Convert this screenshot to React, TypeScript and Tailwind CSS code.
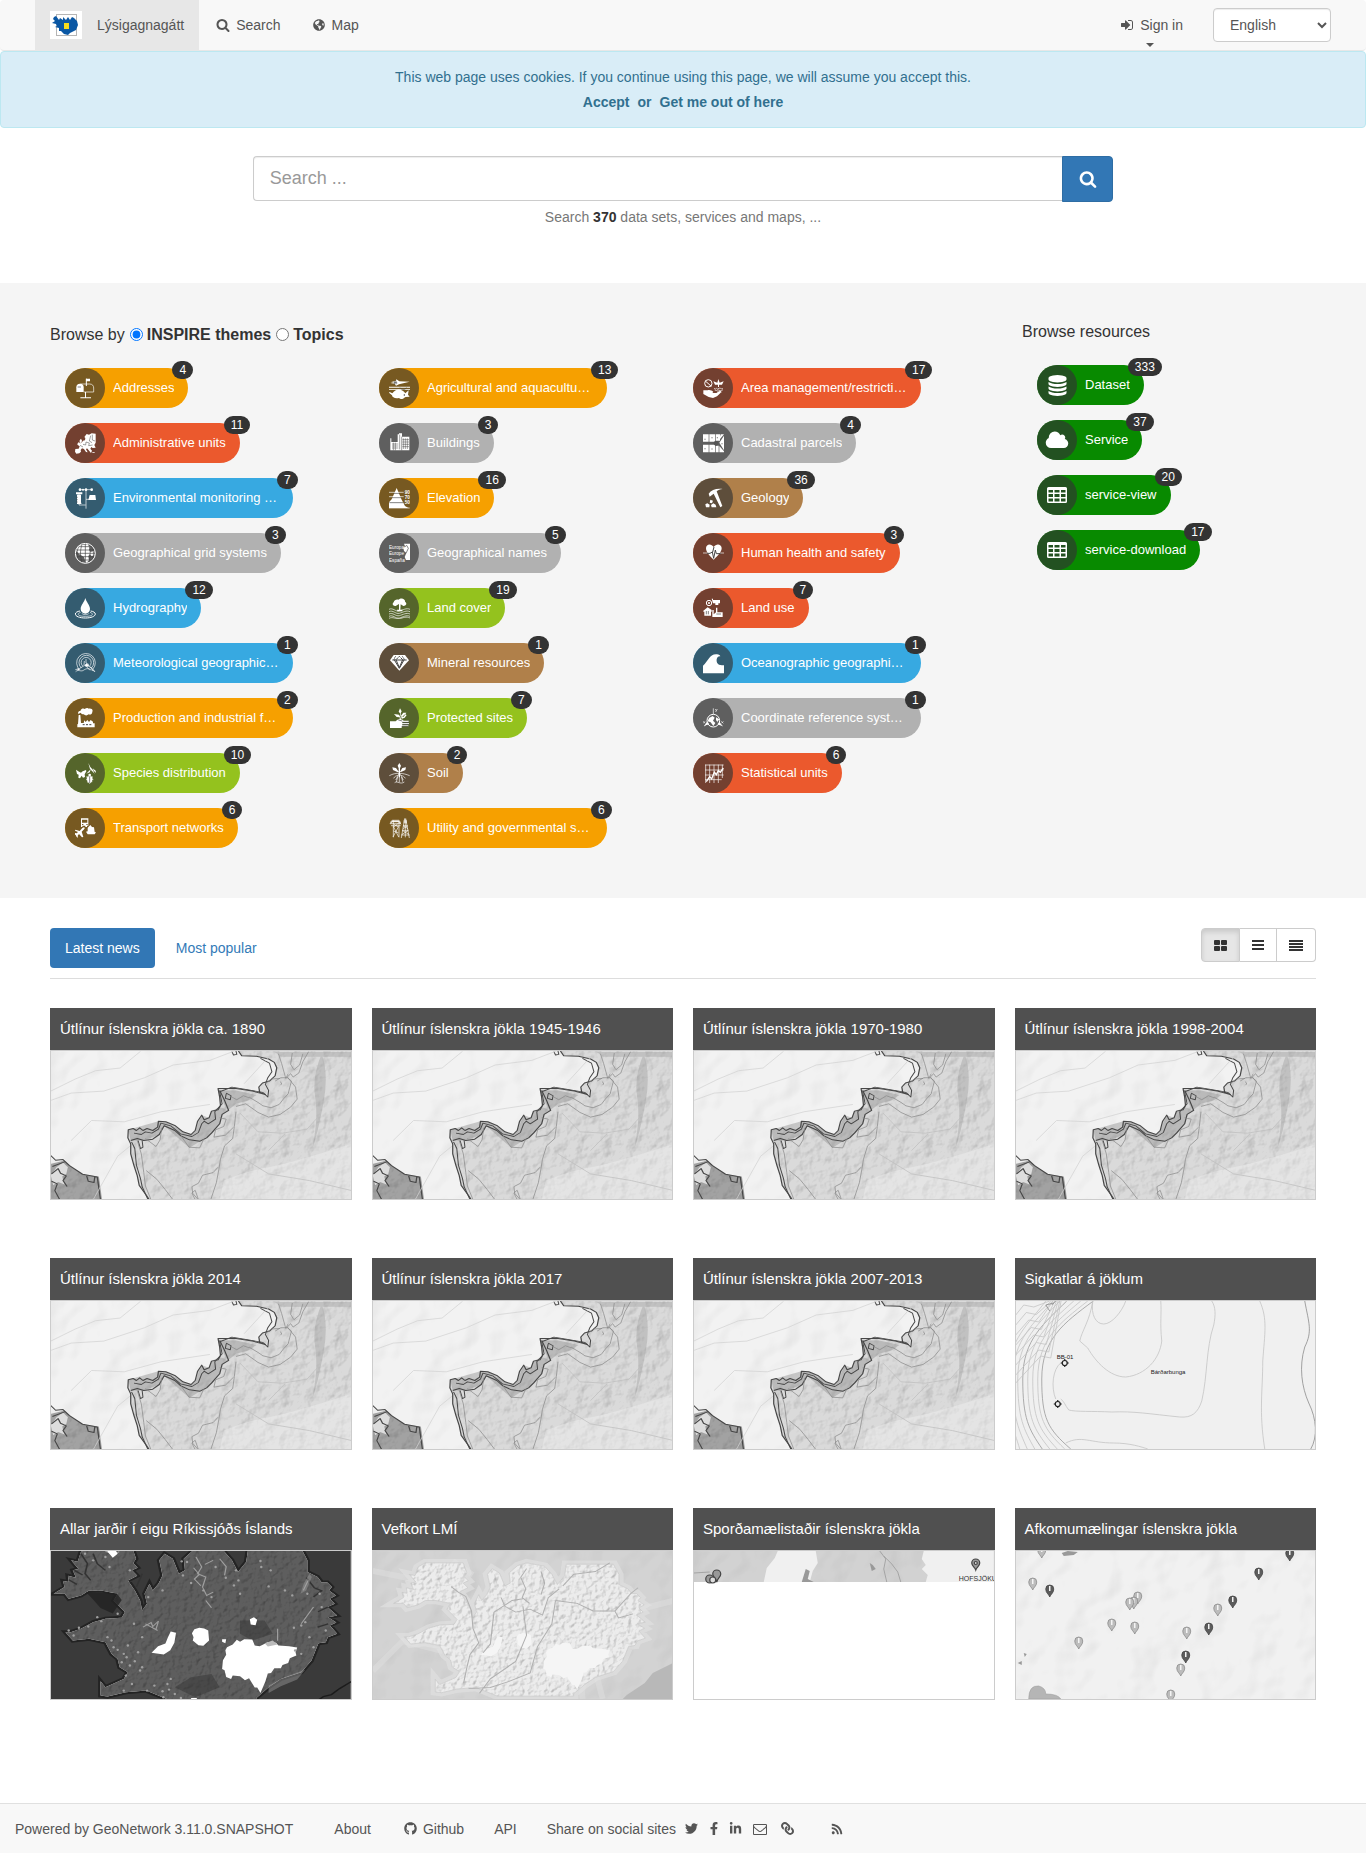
import React from 'react';
import {
  FaFacebookF,
  FaGithub,
  FaGlobeAmericas,
  FaLink,
  FaLinkedinIn,
  FaRss,
  FaTwitter,
} from 'react-icons/fa';

/* ---------- Glyph icons ---------- */

const SEARCH =
  'M1216 832q0-185-131.5-316.5t-316.5-131.5-316.5 131.5-131.5 316.5 131.5 316.5 316.5 131.5 316.5-131.5 131.5-316.5zm512 832q0 52-38 90t-90 38q-54 0-90-38l-343-342q-179 124-399 124-143 0-273.5-55.5t-225-150-150-225-55.5-273.5 55.5-273.5 150-225 225-150 273.5-55.5 273.5 55.5 225 150 150 225 55.5 273.5q0 220-124 399l343 343q37 37 37 90z';
const SIGN_IN =
  'M1312 896q0 26-19 45l-544 544q-19 19-45 19t-45-19-19-45v-288h-448q-26 0-45-19t-19-45v-384q0-26 19-45t45-19h448v-288q0-26 19-45t45-19 45 19l544 544q19 19 19 45zm352-352v704q0 119-84.5 203.5t-203.5 84.5h-320q-13 0-22.5-9.5t-9.5-22.5q0-4-1-20t-.5-26.5 3-23.5 10-19.5 20.5-6.5h320q66 0 113-47t47-113v-704q0-66-47-113t-113-47h-312l-11.5-1-11.5-3-8-5.5-7-9-2-13.5q0-4-1-20t-.5-26.5 3-23.5 10-19.5 20.5-6.5h320q119 0 203.5 84.5t84.5 203.5z';
const ENVELOPE =
  'M1664 1504v-768q-32 36-69 66-268 206-426 338-51 43-83 67t-86.5 48.5-102.5 24.5h-2q-48 0-102.5-24.5t-86.5-48.5-83-67q-158-132-426-338-37-30-69-66v768q0 13 9.5 22.5t22.5 9.5h1472q13 0 22.5-9.5t9.5-22.5zm0-1051v-24.5l-.5-13-3-12.5-5.5-9-9-7.5-14-2.5h-1472q-13 0-22.5 9.5t-9.5 22.5q0 168 147 284 193 152 401 317 6 5 35 29.5t46 37.5 44.5 31.5 50.5 27.5 43 9h2q20 0 43-9t50.5-27.5 44.5-31.5 46-37.5 35-29.5q208-165 401-317 54-43 100.5-115.5t46.5-131.5zm128-37v1088q0 66-47 113t-113 47h-1472q-66 0-113-47t-47-113v-1088q0-66 47-113t113-47h1472q66 0 113 47t47 113z';
const DATABASE =
  'M896 768q237 0 443-43t325-127v170q0 69-103 128t-280 93.5-385 34.5-385-34.5-280-93.5-103-128v-170q119 84 325 127t443 43zm0 768q237 0 443-43t325-127v170q0 69-103 128t-280 93.5-385 34.5-385-34.5-280-93.5-103-128v-170q119 84 325 127t443 43zm0-384q237 0 443-43t325-127v170q0 69-103 128t-280 93.5-385 34.5-385-34.5-280-93.5-103-128v-170q119 84 325 127t443 43zm0-1152q208 0 385 34.5t280 93.5 103 128v128q0 69-103 128t-280 93.5-385 34.5-385-34.5-280-93.5-103-128v-128q0-69 103-128t280-93.5 385-34.5z';
const CLOUD =
  'M1984 1152q0 159-112.5 271.5t-271.5 112.5h-1088q-185 0-316.5-131.5t-131.5-316.5q0-132 71-241.5t187-163.5q-2-28-2-43 0-212 150-362t362-150q158 0 286.5 88t187.5 230q70-62 166-62 106 0 181 75t75 181q0 75-41 138 129 30 213 134.5t84 239.5z';

function Glyph({ d, className, box = '0 0 1792 1792' }: { d: string; className: string; box?: string }) {
  return (
    <svg viewBox={box} className={className} fill="currentColor" aria-hidden="true">
      <path d={d} />
    </svg>
  );
}

function TableIcon() {
  return (
    <svg viewBox="0 0 20 16" className="h-4 w-5" fill="currentColor" aria-hidden="true">
      <path
        fillRule="evenodd"
        d="M1.500 0h17a1.500 1.500 0 0 1 1.500 1.500v13a1.500 1.500 0 0 1-1.500 1.500h-17A1.500 1.500 0 0 1 0 14.500v-13A1.500 1.500 0 0 1 1.500 0zM1.500 3v2.500h4.500V3zM7.500 3v2.500h5V3zM14 3v2.500h4.500V3zM1.500 7v3h4.500V7zM7.500 7v3h5V7zM14 7v3h4.500V7zM1.500 11.500v3h4.500v-3zM7.500 11.500v3h5v-3zM14 11.500v3h4.500v-3z"
      />
    </svg>
  );
}

/* ---------- Theme icons, drawn on a 63 unit square ---------- */

const L = { fill: 'none', stroke: '#fff', strokeWidth: 3 } as const;
const LT = { fill: 'none', stroke: '#fff', strokeWidth: 2 } as const;
const DK = { fill: 'none', stroke: '#444', strokeWidth: 2 } as const;

const themeIcons: Record<string, React.ReactNode> = {
  addresses: (
    <>
      <path d="M4 42V28a11 11 0 0 1 22 0v14z" />
      <path d="M8 27h10" {...DK} />
      <path d="M16 18h28c8 0 12 5 12 12v12H26" {...LT} />
      <path d="M34 24V2" {...L} />
      <path d="M33 2h12v8H33zM30 42h3v17h-3zM16 58h32v3H16z" />
    </>
  ),
  admin: (
    <>
      <path d="M42 5l8-4 12 1v27l-4 7 4 8-9 1-4-3-3 5 5 6-3 7-5-6-7-8-3 3 5 9-5-1-6-9-6-2-4 5 1 5-5 5-9 1-4-6 1-8 10-1 3-7-7-5 2-6 7 2 5-3 3-5 6-1 1-7-3-3 7-9z" />
      <path d="M47 8l-4 16 8 5M52 5v16l8 3M24 34l8 2 1-9 10 3-2 8 12-2M15 37l9 5" {...DK} strokeWidth={1.500} />
      <path d="M14 22l4-5 3 6-2 6-5 1zM10 28l3 2-2 3-3-1zM52 58h7v2h-7zM36 58l6 3" />
    </>
  ),
  environment: (
    <>
      <path d="M14 5h36M33 5v57M12 18v33h20M12 46h8M33 34h9" {...LT} />
      <circle cx="15" cy="5" r="4" />
      <circle cx="24" cy="5" r="3" />
      <circle cx="33" cy="5" r="4" />
      <circle cx="50" cy="5" r="4" />
      <path d="M3 13h19v6H3zM6 20h12v28H6zM44 21h17l2 15H40z" />
      <path d="M4 28h4M4 35h4M4 42h4" {...DK} />
    </>
  ),
  grid: (
    <>
      <path d="M18 6l20-2 8 8-4 8 6 9-8 10 2 14-10 7-5-18-15-9-8-9 4-13zM46 27l11-3 1 11-7 5-6-5z" />
      <path d="M4 21h54M2 31h58M4 41h54M10 11h42M10 51h42M31 2v58M21 4c-6 18-6 36 0 54M41 4c6 18 6 36 0 54M11 11c-6 13-6 27 0 40M51 11c6 13 6 27 0 40" {...DK} strokeWidth={2} />
      <circle cx="31" cy="31" r="30" {...L} />
    </>
  ),
  hydro: (
    <>
      <path d="M31 0c2 11 14 22 14 33a14 14 0 0 1-28 0C17 22 29 11 31 0z" />
      <path d="M15 39c-8 1-14 5-14 9 0 7 13 12 30 12s30-5 30-12c0-4-6-8-14-9" {...L} />
      <path d="M17 43c-4 1-7 3-7 6 0 4 9 6 21 6s21-2 21-6c0-3-3-5-7-6M21 46c1 5 19 5 21 0" {...LT} />
    </>
  ),
  meteo: (
    <>
      <path d="M15 51A28 28 0 1 1 53 49M19 45a22 22 0 1 1 30 0M23 39a15 15 0 1 1 21 0" {...LT} />
      <path d="M33 18v12l8 4M28 24l-1 12" {...LT} />
      <path d="M1 50l12-3 16-10 5-4 9 8 8 5 8 9M2 56c8-8 15 1 23-4s15-9 30 2M30 36l15 16M43 39l17 18" {...LT} />
      <path d="M8 45l5 4-5 5zM33 32l9 3-2 6-11-1z" />
    </>
  ),
  production: (
    <>
      <path d="M9 49L11 21h5l2 24h8l2-8 4 5 5-6 5 6 5-6 7 5v5h5v12H7V48z" />
      <path d="M10 18c-2-6 1-9 6-9 3-9 11-8 13-6 5-4 11-3 12-1 8-2 14 3 11 9 0 8-7 10-11 8-5 5-11 4-15 0-4 0-7-2-9-5z" />
      <path d="M23 50h6M33 50h6M43 50h6" {...DK} strokeWidth={3} />
    </>
  ),
  species: (
    <>
      <path d="M3 20l9 6 6 3 5-4 10-4 1 4-5 9 1 8-6 2-4-6-5 8-5-2 1-9-5-2z" />
      <path d="M40 0l6 12 8 9 5 12-5-6-9-9zM53 16l9 7 1 7-6-6zM34 32l10-10 3-2-3 8z" />
      <circle cx="44" cy="36" r="4" />
      <path d="M37 41l7-2 7 2 2 7-3 8-6 6-6-6-3-8z" />
      <path d="M33 42l21 0M33 50h22M36 57l16-1" {...LT} />
      <path d="M44 40v20" {...DK} />
    </>
  ),
  transport: (
    <>
      <path fillRule="evenodd" d="M18 1h22v22h-4v4h-5v-4h-9v4h-4zM21 5v9h16V5zM21 18v3h4v-3zM34 18v3h4v-3z" />
      <path d="M38 29l8-8 5 6 6 1 2 14 4 1-4 6H38l-5-8 5-1zM1 35l13 4 8-9c5-4 9-2 6 3l-8 8 5 16-4 1-9-10-4 5 1 6-4-2-3-6-6-3 2-3 7 1 4-4L0 38z" />
    </>
  ),
  agriculture: (
    <>
      <path d="M4 15l12-3-9-3 13 1 2-6 9 6 31 1-32 8-9 4-4-6zM0 26h63v3H0zM0 33h63v2H0z" />
      <path d="M2 42l8 4c10-14 27-16 39 0l10-9-2 13 5 6-12 1c-8 4-10 10-20 3-11 3-21-2-21-8L0 44z" />
      <path d="M16 10v9M21 8v11M16 13l9 2M33 29c5 7 16 7 19 0" {...DK} />
      <circle cx="46" cy="51" r="2" fill="#333" />
    </>
  ),
  buildings: (
    <>
      <path fillRule="evenodd" d="M4 16h3v11h19V4h4V1h9v10h22v41H4z" />
      <path d="M32 5v44M38 11v41M9 33h19M9 39h19M9 45h19M13 29v23M19 29v23M43 16v32M49 16v32M55 16v32M40 20h20M40 27h20M40 34h20M40 41h20" {...DK} strokeWidth={1.500} />
    </>
  ),
  elevation: (
    <>
      <path d="M23 0l15 35 10 19 10 6H0V43l8-9z" />
      <path d="M14 16h18M9 29h28M1 44h41" {...DK} />
      <path d="M0 13h44M0 26h44M0 60h62" {...LT} />
      <g fontFamily="Liberation Sans" fontWeight="bold" fontSize="14">
        <text x="47" y="18">90</text>
        <text x="47" y="34">70</text>
        <text x="47" y="49">50</text>
      </g>
    </>
  ),
  names: (
    <>
      <path d="M45 2h18v49H51l-4-9 5-12-7-6-2-10 5-4z" />
      <path d="M47 12l6-5 5 9-7 15" {...DK} />
      <g fontFamily="Liberation Sans" fontSize="14">
        <text x="0" y="19">Europa</text>
        <text x="0" y="37">Europe</text>
        <text x="0" y="56">España</text>
      </g>
    </>
  ),
  landcover: (
    <>
      <path d="M20 24c-10 1-11-8-6-11 2-8 9-10 14-8C39-4 50 5 48 11c8 6 3 13-5 13l-8-5-1 16h6v5H25l-1-5h6V18z" />
      <path d="M0 34c12-6 20 8 31 5s21-10 32-5M0 41c12-6 20 8 31 5s21-10 32-5M0 48c12-6 20 8 31 5s21-10 32-5M0 55c12-6 20 8 31 5s21-10 32-5M0 61c12-6 20 3 31 1s21-8 32-2" {...LT} />
    </>
  ),
  mineral: (
    <>
      <path d="M14 6h34l12 16-29 31L3 22z" />
      <path d="M10 21h43M20 10l-5 9 16 27 15-27-7-10M21 20l10-10 10 10-10 24z" {...DK} strokeWidth={3} />
      <path d="M16 17l8-7 7 8 7-8 8 7" {...LT} />
    </>
  ),
  protected: (
    <>
      <path d="M33 1l5 9-3 6v10h9l8-12-9 0-7 9h-3v-7l-4-5zM15 18l15 2 5 9 1 8h-4V28l-9-1zM36 29l12-10 5 2-6 8-8 3z" />
      <path d="M3 40h17c9-8 14-9 24-2h15v4H40v3h20v4H40v3h18v3H38v5H3z" />
      <path d="M28 36l12 3M41 43h19M40 49h20M39 55h18" {...DK} />
    </>
  ),
  soil: (
    <>
      <path d="M31 0l5 8-3 8v10l7-11 11-2-2 8-13 6h-3v16h-4V27h-4l-13-6-2-8 11 2 8 11V16l-3-8z" />
      <path d="M1 38c20-11 42-8 61 0M31 30c-2 12-11 4-17 16M32 30c2 12 10 4 17 16M28 36c-5 8-4 10-8 15M35 36c5 8 4 10 8 15M31 35v22M26 42l-4 15M38 42l3 14M17 59c9-7 16 7 29-2" {...LT} />
    </>
  ),
  utility: (
    <>
      <path d="M8 10h22v48M13 7v51M3 17h32M6 23h29M3 17l7-7h20l6 9M13 25l16 32M29 25L12 57M13 17l15 10M29 15L13 28M13 39l15 5M49 3v55M47 1L37 60M50 1l11 59M42 23l15 9M57 23l-15 9M40 37l19 12M58 37L38 50M43 23h12M40 37h18M37 51h25" {...LT} />
      <path d="M44 7h10v9H44zM3 12l7-7h20l6 8-3 5-5-5H10l-4 5z" fillOpacity=".6" />
    </>
  ),
  area: (
    <>
      <circle cx="16" cy="16" r="11" {...L} />
      <path d="M7 9l18 16" {...L} />
      <path d="M46 3l4 11 12-4-5 10h-9v7h-3v-7h-9l-5-10 12 4z" />
      <path d="M1 37h13c5-2 13 0 17 5l-3 3h12l12-7c4 2 1 6-2 9l-8 8-12 5-13-3L1 48z" />
      <path d="M33 31c8 6 4-4 11 2 7-6 9 1 16-1M35 36c9 5 8-4 13 1 7 3 9-2 12-1M42 42h14" {...LT} />
    </>
  ),
  cadastral: (
    <>
      <path d="M0 4h17v22H0zM19 4h17v22H19zM38 4h13v19H38zM53 4h10l-15 18zM0 35h17v23H0zM19 35h17v23H19zM38 38h9v20H38zM49 29l14-21v44zM49 39l14 16v3H49z" />
      <circle cx="39" cy="31" r="7" fill="#555" />
      <path d="M6 17v4M27 12v4M43 12v4M6 45v4M27 46v4M57 30v4" {...DK} />
    </>
  ),
  geology: (
    <>
      <path d="M17 17c8-12 23-16 42-14-8 1-14 3-18 7l17 44-6 4-20-41-12 9z" />
      <path d="M7 49l6-3 7 4-1 8H9zM22 35l8 3-3 8-7-2zM31 46l7 4 2 8H26l-2-7z" />
    </>
  ),
  health: (
    <>
      <path d="M32 12C25 1 10 2 9 15c0 12 9 21 23 35 14-14 24-23 24-35C55 2 39 1 32 12z" />
      <path d="M11 31h10l7-4 4 19 5-25 3 11h15M33 12l-4 15" {...DK} strokeWidth={3} />
      <path d="M0 30h13M52 30h11" {...LT} />
    </>
  ),
  landuse: (
    <>
      <circle cx="18" cy="15" r="8" {...L} />
      <circle cx="18" cy="15" r="3" />
      <path d="M26 2h4v4h21v10h-5v5h-9v-5h-7zM1 38l13-10 12 8v5h-2v12H4V41H1zM28 57V36h4v13l7-6V29h4v14h16v14z" />
      <path d="M10 39v10M16 39v10M40 48h14" {...DK} />
    </>
  ),
  ocean: (
    <path d="M0 38C16 25 19 2 42 4c6 0 9 3 10 6-13-2-15 20-4 25 6 2 12 1 15 2v24H0z" />
  ),
  coordinate: (
    <>
      <circle cx="31" cy="38" r="19" {...L} />
      <path d="M18 30l11-6 6 5-5 9 7 7-6 9-8-11-9-3zM39 28l10 6-6 8-4-6zM4 53l8-12 6 8zM58 53l-9-12-4 9z" />
      <path d="M31 19V1M3 54l15-9M44 45l15 9M37 3l3 5 3-5M40 8l-2 4M1 40l5 6M6 40l-5 6M55 40l6 6M61 40l-6 6" {...LT} />
    </>
  ),
  statistical: (
    <>
      <path d="M8 5v55M20 5v55M33 5v55M46 5v55M58 5v40M6 6h56M6 21h56M6 36h56M6 50h50" {...LT} />
      <path d="M10 56l10-15 6 7 8-21 6 8 6-12 6 5 9-13" {...L} strokeWidth={4} />
    </>
  ),
};

/* ---------- Facet chips ---------- */

type Tone = 'orange' | 'red' | 'blue' | 'gray' | 'brown' | 'lime' | 'green';

const tones: Record<Tone, string> = {
  orange: 'bg-[#f6a000]',
  red: 'bg-[#eb592d]',
  blue: 'bg-[#37a9e1]',
  gray: 'bg-[#b1b1b1]',
  brown: 'bg-[#b0804a]',
  lime: 'bg-[#94c21e]',
  green: 'bg-[#088a00]',
};

function Chip({ label, count, tone, icon }: { label: string; count: number; tone: Tone; icon: React.ReactNode }) {
  return (
    <a
      href="#"
      className={`relative flex h-10 w-fit max-w-[228px] items-center rounded-full pr-[14px] text-[13px] text-white ${tones[tone]}`}
    >
      <span className="flex h-10 w-10 shrink-0 items-center justify-center rounded-full bg-[#333333a6]">{icon}</span>
      <span className="ml-2 min-w-0 truncate">{label}</span>
      <span className="absolute -top-[7px] left-[calc(100%-16px)] h-[18px] rounded-[10px] bg-[#333] px-[7px] text-xs leading-[18px]">
        {count}
      </span>
    </a>
  );
}

const themes: [string, number, Tone, string][] = [
  ['Addresses', 4, 'orange', 'addresses'],
  ['Agricultural and aquaculture facilities', 13, 'orange', 'agriculture'],
  ['Area management/restriction/regulation zones', 17, 'red', 'area'],
  ['Administrative units', 11, 'red', 'admin'],
  ['Buildings', 3, 'gray', 'buildings'],
  ['Cadastral parcels', 4, 'gray', 'cadastral'],
  ['Environmental monitoring facilities', 7, 'blue', 'environment'],
  ['Elevation', 16, 'orange', 'elevation'],
  ['Geology', 36, 'brown', 'geology'],
  ['Geographical grid systems', 3, 'gray', 'grid'],
  ['Geographical names', 5, 'gray', 'names'],
  ['Human health and safety', 3, 'red', 'health'],
  ['Hydrography', 12, 'blue', 'hydro'],
  ['Land cover', 19, 'lime', 'landcover'],
  ['Land use', 7, 'red', 'landuse'],
  ['Meteorological geographical features', 1, 'blue', 'meteo'],
  ['Mineral resources', 1, 'brown', 'mineral'],
  ['Oceanographic geographical features', 1, 'blue', 'ocean'],
  ['Production and industrial facilities', 2, 'orange', 'production'],
  ['Protected sites', 7, 'lime', 'protected'],
  ['Coordinate reference systems', 1, 'gray', 'coordinate'],
  ['Species distribution', 10, 'lime', 'species'],
  ['Soil', 2, 'brown', 'soil'],
  ['Statistical units', 6, 'red', 'statistical'],
  ['Transport networks', 6, 'orange', 'transport'],
  ['Utility and governmental services', 6, 'orange', 'utility'],
];

/* ---------- Map thumbnails ---------- */

function Relief({ id, frequency, octaves, scale }: { id: string; frequency: string; octaves: number; scale: number }) {
  return (
    <filter id={id} x="0" y="0" width="100%" height="100%" colorInterpolationFilters="sRGB">
      <feTurbulence type="fractalNoise" baseFrequency={frequency} numOctaves={octaves} seed="4" />
      <feDiffuseLighting surfaceScale={scale} diffuseConstant="1.22" lightingColor="#fff" result="l">
        <feDistantLight azimuth="215" elevation="55" />
      </feDiffuseLighting>
      <feComposite in="l" in2="SourceAlpha" operator="in" result="m" />
      <feBlend in="SourceGraphic" in2="m" mode="multiply" />
    </filter>
  );
}

function TerrainFilters() {
  return (
    <svg className="absolute h-0 w-0" aria-hidden="true">
      <defs>
        <Relief id="faint" frequency="0.02" octaves={3} scale={1} />
        <Relief id="soft" frequency="0.03" octaves={4} scale={2} />
        <Relief id="rough" frequency="0.07" octaves={4} scale={2} />
      </defs>
    </svg>
  );
}

function MapFrame({ children, bg, label }: { children: React.ReactNode; bg: string; label: string }) {
  return (
    <svg viewBox="0 0 300 148" preserveAspectRatio="xMidYMid slice" className="block h-full w-full" role="img" aria-label={label}>
      <rect width="300" height="148" fill={bg} />
      {children}
    </svg>
  );
}

const FRONT =
  'M486 422L494 436L530 438L560 446L574 456L580 472L576 496L562 512L545 518L536 530L538 545L552 552L520 542L480 534L436 534L440 560L442 585L436 598L420 602L414 622L402 628L396 614L386 632L380 660L370 672L350 664L330 645L308 634L290 632L288 650L276 660L262 654L252 660L244 652L236 660L228 654L216 658L215 682L222 700L222 730L230 765L238 795L243 825L258 850L268 868';
const TONGUE =
  'M440 540L452 570L462 600L446 612L440 640L420 668L408 682L392 692L366 688L345 676L330 660L304 646L292 672L276 686L254 690L238 684L222 690';

function GlacierMap({ label }: { label: string }) {
  return (
    <MapFrame bg="#ececec" label={label}>
      <rect width="300" height="148" fill="#f2f2f2" filter="url(#faint)" />
      <g transform="scale(.408 .334) translate(-26 -422)">
        <path d={FRONT + 'L764 868V422z'} fill="#dadada" filter="url(#soft)" />
        <path d="M690 430q18 60 4 150t-26 130q14-90 6-150t16-130zM575 425h190v14H590z" fill="#888" fillOpacity=".3" />
        <path d="M450 810q60-30 110-40t204-70v168H440z" fill="#f2f2f2" fillOpacity=".4" />
        <path d="M216 658L290 632L308 634L350 664L370 672L380 660L396 614L414 622L420 602L440 590L462 600L446 612L440 640L420 668L408 682L392 692L366 712L345 690L304 646L292 672L254 690L222 690zM440 540l40 0 50 14-20 16-30 10-20 20-14-30z" fill="#999" fillOpacity=".5" />
        <path d="M26 760L60 750L75 768L105 792L144 798L152 868H26z" fill="#a2a2a2" filter="url(#soft)" />
        <path d="M40 770l16-14 12 14-4 20-10 8 6 24-16-8-12 10-6-30z" fill="#ddd" />
      </g>
      <g transform="scale(.408 .334) translate(-26 -422)" fill="none">
        <g stroke="#474747" strokeWidth="3" strokeLinejoin="round">
          <path d={FRONT} />
          <path d={TONGUE} />
          <path d="M540 444L562 458L568 484L558 502L552 522L560 540L558 560L546 546L500 536L470 530L440 544L446 580L428 604L430 626L412 640L402 632L396 640L388 666L372 678L344 670L320 646L296 638L290 656L274 668L258 664L248 672L230 668" strokeWidth="2.500" />
          <path d="M224 694l8 20 4 50 10 40 4 24 14 38M240 690l6 24 6-4-2-20" strokeWidth="2.500" />
          <path d="M26 735l12 14 18-2 16 18 32 26 36 8 8 69M28 790l16-16 6 14 14 8-8 14 10 18M114 796l4 16 14 4 2-18M30 768l30-14M28 812l14 8-6 20 12 27" />
          <path d="M470 424l4 10 8-2-2-10M456 548l12 8-2 12-12-4 2-14" strokeWidth="2.500" />
        </g>
        <g stroke="#8a8a8a" strokeWidth="2">
          <path d="M470 560l12 8 16-12 14 6M512 560l22 16 12 10 20 6 20-10 10-16 12-16 4-20 4-18-10-10-16 0-14 10M604 502l10-12 6 10 14-12 10-34 14-30" />
          <path d="M480 588l24-8 30 26 26 14 28-8 26-22 16-24-4-36-20-30M584 430l8 30 10 44 6-14M618 428l-4 34 8 16 14-14 8-34M552 520l14-14 22-2M588 514l4 4-2 6" />
          <path d="M480 604l-4 44-4 36-20 22-10 40-4 30-6 40-14 52M474 650l-20 24-28 6 4-22 20-10 6-22-16-4M436 770l-12 16-26 8-10 24-16 10 2 20 14 20M238 690l10 40 6 56 4 40 14 42" />
          <path d="M258 684l26 24 10-20 4-36M345 676l20 34 26 2 10-26M260 780l26 26 20 30 20 32M380 867l-8-20 8-8 8 28" />
        </g>
        <g stroke="#d2d2d2" strokeWidth="2">
          <path d="M26 542l60-36 50-25 60-8 50-50M26 570l50-22 80-6 100-40 70-38 90-14 60-28M76 690l50-60 80 4 90-30 120-22M130 867l60-130 30-30M500 520l60-80" />
        </g>
        <path d="M490 608l44 56 60 4 60-12 30-40M480 730l80 60 100 20 104 30M560 720l40-50" stroke="#bebebe" strokeWidth="2" />
      </g>
    </MapFrame>
  );
}

function CraterMap({ label }: { label: string }) {
  const rings = [0, 5, 10, 15, 20, 25, 30, 34];
  return (
    <MapFrame bg="#f0f0f0" label={label}>
      <g fill="none" stroke="#c4c4c4" strokeWidth=".8">
        {rings.map((r, i) => (
          <path key={r} d={`M${30 + r * 1.400} 0C${14 + r} 22 ${-8 + r} 38 ${-8 + r} 78S${-2 + r} 128 ${4 + r * 1.500} 148`} stroke={i % 4 === 3 ? '#999' : '#c4c4c4'} />
        ))}
        {rings.map((r) => (
          <path key={'a' + r} d={`M0 ${14 + r * 2}l${8 + r / 2} ${-10 - r / 2} 10 2L${34 + r / 3} 0`} />
        ))}
        <path d="M77 0c-2 14 3 23 11 23s18-12 22-23M77 0C74 20 66 30 64 40l8 7c8 14 22 29 38 29 20-2 34-18 36-36-2-18 0-28-1-40M196 0c4 6 4 14 2 24-8 24-6 50-12 76-4 12-10 17-22 16-30-3-46-6-68-5-20-1-36 0-43-2-4-5-4-8-8-11M45 62c-8 6-10 24-5 36M244 0c8 18 5 32 3 60 0 30-4 50 2 88M50 142c16-8 24 0 48 0 16 0 28 4 34 6" />
        <path d="M289 0c4 22 8 30 0 46-6 20-3 40 4 56 8 16 9 34 2 46" stroke="#8c8c8c" />
        <path d="M36 4l4-4M34 10l-4-6 8-2" stroke="#888" />
      </g>
      <g fill="none" stroke="#222" strokeWidth="1.200">
        <circle cx="49" cy="62" r="2.500" />
        <path d="M49 58v2M49 64v2M45 62h2M51 62h2" />
        <circle cx="42" cy="103" r="2.500" />
        <path d="M42 99v2M42 105v2M38 103h2M44 103h2" />
      </g>
      <g fontFamily="Liberation Sans" fontSize="6" fill="#222">
        <text x="41" y="58">BB-01</text>
        <text x="135" y="73">Bárðarbunga</text>
      </g>
    </MapFrame>
  );
}

const COAST =
  'M33 310L60 290L56 272L70 275L68 256L88 262L80 240L94 236L76 210L92 214L100 185L120 170H225L235 205L228 218L239 232L225 240L238 256L215 270L232 300L245 330L250 360L262 340L256 310L268 280L276 300L290 280L300 255L292 210L305 190L325 205L340 250L355 240L352 205L375 180L400 170L450 182L470 210L485 245L505 215L510 175H640L655 210L655 245L680 260L690 276L704 276L715 290L708 300L725 315L710 325L722 340L704 350L728 375L706 380L726 396L710 405L728 430L705 440L700 455L682 458L665 510L640 545L590 565L560 590L530 622V630H320L260 600L210 605L165 618L148 615V572L160 590L205 565L215 545L195 530L190 505L175 490L160 455L120 445L80 450L62 425L75 425L100 415L130 395L160 385L200 382L208 365L180 330L190 310L150 300L120 300L100 315L70 325L60 310z';
const ICECAP =
  'M458 470l14-8 10-14 8 6 10-8 20 1 6 18 12 2 20-12 20 2 6 8 26 2 20 4-4 14 2 10-16 8-4 14-14 6-4 10-16 0-8 14-8 2-6 24-12 34-8-16-6 0-14-28-10 6-12-12-18-2-4 10-12-6-4-20-6-4 2-26 8-16-2-14z';
const LANGJOKULL = 'M320 423l13 4-4 30-10 22-16 13-30-5 16-20 18-8 6-18z';
const HOFSJOKULL = 'M378 416l12-4 12 2 10 6 2 30-14 16-12-2-14-14 2-10-4-12z';

const FARMS = [
  [70, 420], [82, 435], [95, 412], [118, 408], [140, 380], [150, 392], [165, 440], [180, 470], [190, 478], [205, 490],
  [212, 500], [220, 525], [240, 485], [200, 515], [232, 512], [210, 555], [225, 580], [245, 540], [250, 530], [205, 600],
  [262, 600], [280, 585], [300, 602], [312, 580], [320, 565], [316, 597], [330, 610], [302, 620], [345, 622], [360, 215],
  [347, 213], [430, 230], [455, 262], [475, 285], [490, 310], [486, 270], [540, 212], [542, 230], [560, 288], [600, 300],
  [618, 315], [655, 310], [640, 405], [622, 412], [650, 395], [685, 310], [690, 350], [700, 420], [660, 440], [670, 470],
  [640, 490], [625, 480], [370, 278], [400, 300], [420, 320], [350, 255], [300, 300], [265, 320], [110, 190], [130, 210],
  [170, 230], [160, 200], [220, 240], [190, 370], [230, 400], [565, 240], [480, 240], [250, 440], [215, 465], [175, 450],
];

function SatelliteMap({ label }: { label: string }) {
  return (
    <MapFrame bg="#3a3a3a" label={label}>
      <g transform="scale(.408 .334) translate(-26 -182)">
        <path d={COAST} fill="none" stroke="#1e1e1e" strokeWidth="12" strokeOpacity=".8" />
        <path d={COAST} fill="#5e5e5e" filter="url(#rough)" />
        <path d="M112 305l76 4 12 20-22 40-30-16-20-28z" fill="#222" fillOpacity=".8" />
        <path d="M330 590l40-30 50-10 20 40-60 30zM490 390l60 0 20 40-50 20-30-20z" fill="#333" fillOpacity=".5" />
        <path d="M100 190l16 30-6 30 14 20M84 240l20 14M70 268l20 14M130 190l10 30 20 20M652 262l20 30 20 10M690 300l-20 20M705 350l-24 14M706 400l-26 10M250 250l-14 40" fill="none" stroke="#333" strokeWidth="4" />
        <g fill="none" stroke="#ccc" strokeOpacity=".6" strokeWidth="3">
          <path d="M382 200l14 30-10 20 20 10-8 30 10 25 16-10M404 222l20-12M376 232l14 20-12 14 16 20M440 205l16 24-4 26M645 300l12-30M640 400l30-50M252 410l20-14 4 12 14-16-6 24M258 400l30 20M406 330l14 22M582 415v36M160 182l20 12 14-10" />
        </g>
        <path d="M560 585l40-26 50-22-20 30-40 20-30 20zM660 250l-14 30-8 30 14-10 14-40z" fill="#aaa" fillOpacity=".4" />
        <path d={ICECAP} fill="#fff" />
        <path d={LANGJOKULL} fill="#fff" />
        <path d={HOFSJOKULL} fill="#fff" />
        <path d="M164 182l14 20 12-12-4-8zM514 386l10-6 8 8-4 16-12-2zM446 446l10 0-2 12-8-4zM370 622h14v8h-14z" fill="#fff" />
        <path d="M550 458l20-8 12 12-24 6z" fill="#bbb" />
        <path d="M764 572l-30 22-20 18-20 6-14 12" fill="none" stroke="#1c1c1c" strokeWidth="4" />
      </g>
      <g fill="#a0a0a0">
        {FARMS.map(([x, y]) => (
          <circle key={`${x}-${y}`} cx={(x - 26) * 0.408} cy={(y - 182) * 0.334} r="1.200" />
        ))}
      </g>
    </MapFrame>
  );
}

function BaseMap({ label }: { label: string }) {
  return (
    <MapFrame bg="#cfcfcf" label={label}>
      <rect width="300" height="148" fill="#d3d3d3" filter="url(#faint)" />
      <path d="M300 112l-20 10-8 10-18 12-4 4h50z" fill="#b8b8b8" />
      <path d="M210 148c-4-20 10-30 30-40M230 148l-8-30M0 120l30-30 40 10M0 20l50 10M80 10l20 14M260 60l40-10" stroke="#e0e0e0" strokeWidth="6" strokeOpacity=".5" fill="none" />
      <g transform="translate(9 6) scale(.362 .29) translate(0 -150)">
        <path d={COAST} fill="none" stroke="#e2e2e2" strokeWidth="26" strokeOpacity=".6" />
        <path d={COAST} fill="#ececec" filter="url(#rough)" />
        <path d={COAST} fill="none" stroke="#c2c2c2" strokeWidth="2" />
        <path d={ICECAP} fill="#f5f5f5" />
        <path d={LANGJOKULL} fill="#f5f5f5" />
        <path d={HOFSJOKULL} fill="#f5f5f5" />
        <g fill="none" stroke="#b0b0b0" strokeWidth="3">
          <path d="M192 252l20 20 20 14 16 50 4 60 16 50-24 40-8 40-10 60M280 480l20-30 10-110 50-40 30-6M330 290l10 30 30 20 40-10 34 20 16-60 30-30M390 320l10 100-30 90-70 60-30 50M480 300l60 10 44 26 60 0 44-60 20-20M480 300l-10 80-40 80-20 90-60 30-50 20-60 4M644 336l10 24 40-14M500 250l30-40 60-10 40-30M400 190l-16 30 14 40-10 30 20 20M440 200l10 40-10 40" />
        </g>
      </g>
    </MapFrame>
  );
}

function Pin({ x, y, dark = false }: { x: number; y: number; dark?: boolean }) {
  return (
    <g transform={`translate(${x} ${y})`}>
      <path d="M0 8C-1 5-4 4-4 0a4 4 0 0 1 8 0C4 4 1 5 0 8z" fill={dark ? '#5c5c5c' : '#bcbcbc'} stroke={dark ? '#444' : '#8c8c8c'} strokeWidth=".8" />
      <path d="M0-3v5" stroke="#f4f4f4" strokeWidth="1.500" />
    </g>
  );
}

function StripMap({ label }: { label: string }) {
  return (
    <MapFrame bg="#fff" label={label}>
      <rect width="300" height="31" fill="#d2d2d2" filter="url(#faint)" />
      <path d="M70 31l3-14 8-10 3-7h38l2 12-5 8-3 11zM230 0l-2 8 4 6-4 4 6 6-2 7h68V0z" fill="#f0f0f0" />
      <path d="M186 0l6 8-2 10 3 13M190 5l8 8 6 8 3 10M0 22l16-1" fill="none" stroke="#999" strokeWidth=".8" />
      <path d="M112 18l4 2-2 8 6 3h-12zM176 12l3 2 3 4-4 2z" fill="#999" />
      <g stroke="#444" strokeWidth="1.200" fill="#999">
        <path d="M23 31c-1-4-4-5-4-8a4 4 0 0 1 8 0c0 3-3 4-4 8z" />
        <circle cx="16" cy="28" r="4" />
        <circle cx="19" cy="29" r="3" fill="#ddd" />
        <path d="M282 19c-1-3-4-4-4-7a4 4 0 0 1 8 0c0 3-3 4-4 7z" />
        <circle cx="282" cy="12" r="1.500" fill="#ddd" />
      </g>
      <text x="265" y="30" fontFamily="Liberation Sans" fontSize="7" fill="#333">HOFSJÖKUL</text>
    </MapFrame>
  );
}

const PINS: [number, number, boolean][] = [
  [26, -1, false], [17, 31, false], [34, 38, true], [122, 45, false], [118, 50, false], [114, 51, false],
  [96, 72, false], [119, 75, false], [63, 90, false], [274, 2, true], [243, 21, true], [217, 49, true],
  [202, 57, false], [193, 76, true], [171, 80, false], [170, 104, true], [165, 117, false], [155, 143, false],
];

function PinMap({ label }: { label: string }) {
  return (
    <MapFrame bg="#ededed" label={label}>
      <rect width="300" height="148" fill="#f1f1f1" filter="url(#faint)" />
      <path d="M13 148q0-14 10-13 7 2 7 8 12 0 15 5z" fill="#b5b5b5" stroke="#a0a0a0" strokeWidth=".6" />
      <path d="M2 112l4-2v4zM8 102l3 1-2 3zM46 2l6-2 10 1-4 3-10 1z" fill="#999" />
      {PINS.map(([x, y, dark]) => (
        <Pin key={`${x}-${y}`} x={x} y={y} dark={dark} />
      ))}
    </MapFrame>
  );
}

const records: [string, (p: { label: string }) => React.ReactElement][] = [
  ['Útlínur íslenskra jökla ca. 1890', GlacierMap],
  ['Útlínur íslenskra jökla 1945-1946', GlacierMap],
  ['Útlínur íslenskra jökla 1970-1980', GlacierMap],
  ['Útlínur íslenskra jökla 1998-2004', GlacierMap],
  ['Útlínur íslenskra jökla 2014', GlacierMap],
  ['Útlínur íslenskra jökla 2017', GlacierMap],
  ['Útlínur íslenskra jökla 2007-2013', GlacierMap],
  ['Sigkatlar á jöklum', CraterMap],
  ['Allar jarðir í eigu Ríkissjóðs Íslands', SatelliteMap],
  ['Vefkort LMÍ', BaseMap],
  ['Sporðamælistaðir íslenskra jökla', StripMap],
  ['Afkomumælingar íslenskra jökla', PinMap],
];

/* ---------- Page ---------- */

function Logo() {
  return (
    <svg viewBox="0 0 32 28" className="h-7 w-8" aria-hidden="true">
      <rect width="32" height="28" fill="#fff" />
      <rect x="6.500" y="3.500" width="20" height="21" fill="none" stroke="#b5b5b5" />
      <path d="M4 6l2-1 3 4 1-2 3 2 0-3 3 3 2-3 2 3 2-3 2 1 3 3 1 4-2 5-4 2-2 1-2 2-4-1-3-3-2 0 0-3-4-1 2-1-1-2-4-1 3-2-2-2z" fill="#0a57a4" />
      <rect x="14" y="12" width="5" height="6" fill="#f5dc1e" />
    </svg>
  );
}

function Header() {
  return (
    <nav className="flex h-[51px] items-stretch rounded border-b border-[#e7e7e7] bg-[#f8f8f8] pr-[35px] pl-[35px] text-[#555]">
      <a href="#" className="flex items-center bg-[#e7e7e7] px-[15px]">
        <Logo />
        <span className="ml-[15px]">Lýsigagnagátt</span>
      </a>
      <a href="#" className="ml-[17px] flex items-center">
        <Glyph d={SEARCH} className="mr-[6px] h-[14px] w-[14px]" />
        Search
      </a>
      <a href="#" className="ml-8 flex items-center">
        <FaGlobeAmericas className="mr-[7px] h-3 w-3" />
        Map
      </a>
      <a href="#" className="relative ml-auto flex items-center">
        <Glyph d={SIGN_IN} className="mr-[6px] h-[14px] w-[14px]" />
        Sign in
        <span className="absolute bottom-[3px] left-[26px] border-x-4 border-t-4 border-x-transparent border-t-[#555]" />
      </a>
      <select
        aria-label="Language"
        className="ml-[30px] h-[34px] w-[118px] self-center rounded border border-[#ccc] bg-white px-3 text-[#555] shadow-[inset_0_1px_1px_rgba(0,0,0,0.075)]"
      >
        <option>English</option>
      </select>
    </nav>
  );
}

function ViewButtons() {
  const base = 'flex h-[34px] items-center justify-center border border-[#ccc] text-[#333]';
  return (
    <div className="flex">
      <button type="button" aria-label="Grid view" className={`${base} w-[39px] rounded-l border-[#adadad] bg-[#e6e6e6] shadow-[inset_0_3px_5px_rgba(0,0,0,0.125)]`}>
        <svg viewBox="0 0 13 11" className="h-[11px] w-[13px]" fill="currentColor">
          <rect width="6" height="5" rx="1" />
          <rect x="7" width="6" height="5" rx="1" />
          <rect y="6" width="6" height="5" rx="1" />
          <rect x="7" y="6" width="6" height="5" rx="1" />
        </svg>
      </button>
      <button type="button" aria-label="List view" className={`${base} w-[37px] border-l-0`}>
        <svg viewBox="0 0 12 10" className="h-[10px] w-3" fill="currentColor">
          <path d="M0 0h12v2H0zM0 4h12v2H0zM0 8h12v2H0z" />
        </svg>
      </button>
      <button type="button" aria-label="Text view" className={`${base} w-[39px] rounded-r border-l-0`}>
        <svg viewBox="0 0 14 11" className="h-[11px] w-[14px]" fill="currentColor">
          <path d="M0 0h14v2H0zM0 3h14v2H0zM0 6h14v2H0zM0 9h14v2H0z" />
        </svg>
      </button>
    </div>
  );
}

export default function App() {
  return (
    <div className="bg-white font-['Liberation_Sans',Arial,sans-serif] text-sm leading-5 text-[#333]">
      <TerrainFilters />
      <Header />

      <div className="rounded border border-[#bce8f1] bg-[#d9edf7] p-[15px] text-center text-[#31708f]">
        <p>This web page uses cookies. If you continue using this page, we will assume you accept this.</p>
        <p className="mt-[5px] flex justify-center gap-2 font-bold">
          <a href="#">Accept</a>
          <span>or</span>
          <a href="#">Get me out of here</a>
        </p>
      </div>

      <form className="mx-auto w-[63%] pt-7 pb-14" onSubmit={(e) => e.preventDefault()}>
        <div className="flex items-start">
          <input
            type="text"
            aria-label="Search"
            placeholder="Search ..."
            className="h-[45px] min-w-0 flex-1 rounded-l border border-r-0 border-[#ccc] bg-white px-4 text-lg shadow-[inset_0_1px_1px_rgba(0,0,0,0.075)] placeholder:text-[#999]"
          />
          <button type="submit" aria-label="Search" className="flex h-[46px] w-[51px] items-center justify-center rounded-r border border-[#2e6da4] bg-[#3277b5] text-white">
            <Glyph d={SEARCH} className="h-[18px] w-[18px]" />
          </button>
        </div>
        <p className="mt-[5px] text-center text-[#777]">
          Search <strong className="text-[#333]">370</strong> data sets, services and maps, ...
        </p>
      </form>

      <section className="grid grid-cols-[942fr_294fr] gap-x-[30px] bg-[#f5f5f5] px-[50px] pb-[50px]">
        <div className="pt-10">
          <div className="flex items-center gap-[5px] text-base leading-6">
            <span>Browse by</span>
            <label className="flex items-center gap-1 font-bold">
              <input type="radio" name="browse" defaultChecked className="mb-[2px] h-[13px] w-[13px]" />
              INSPIRE themes
            </label>
            <label className="flex items-center gap-1 font-bold">
              <input type="radio" name="browse" className="mb-[2px] h-[13px] w-[13px]" />
              Topics
            </label>
          </div>
          <div className="mt-[21px] grid grid-cols-3 gap-y-[15px]">
            {themes.map(([label, count, tone, icon]) => (
              <div key={label} className="pl-[15px]">
                <Chip
                  label={label}
                  count={count}
                  tone={tone}
                  icon={
                    <svg viewBox="0 0 63 63" className="h-[21px] w-[21px]" fill="#fff" aria-hidden="true">
                      {themeIcons[icon]}
                    </svg>
                  }
                />
              </div>
            ))}
          </div>
        </div>
        <div className="pt-[37px]">
          <h2 className="text-base leading-6">Browse resources</h2>
          <div className="mt-[21px] flex flex-col gap-[15px] pl-[15px]">
            <Chip label="Dataset" count={333} tone="green" icon={<Glyph d={DATABASE} className="h-[21px] w-[21px]" />} />
            <Chip label="Service" count={37} tone="green" icon={<Glyph d={CLOUD} box="0 0 2048 1792" className="h-[21px] w-6" />} />
            <Chip label="service-view" count={20} tone="green" icon={<TableIcon />} />
            <Chip label="service-download" count={17} tone="green" icon={<TableIcon />} />
          </div>
        </div>
      </section>

      <main className="px-[50px] pt-[30px] pb-[103px]">
        <div className="flex items-start justify-between border-b border-[#ddd] pb-[10px]">
          <div className="flex gap-[6px]">
            <a href="#" className="rounded bg-[#3277b5] px-[15px] py-[10px] text-white">Latest news</a>
            <a href="#" className="px-[15px] py-[10px] text-[#337ab7]">Most popular</a>
          </div>
          <ViewButtons />
        </div>
        <div className="mt-[29px] grid grid-cols-4 gap-x-5 gap-y-[58px]">
          {records.map(([title, Thumb]) => (
            <a key={title} href="#" className="block">
              <h3 className="h-[42px] truncate bg-[#505050] px-[10px] text-[15px] leading-[42px] text-white">{title}</h3>
              <div className="h-[150px] overflow-hidden border border-[#ccc]">
                <Thumb label={title} />
              </div>
            </a>
          ))}
        </div>
      </main>

      <footer className="flex h-[50px] items-center border-t border-[#e0e0e0] bg-[#f8f8f8] pl-[15px] text-[#555]">
        <a href="#">Powered by GeoNetwork 3.11.0.SNAPSHOT</a>
        <a href="#" className="ml-[41px]">About</a>
        <a href="#" className="ml-[33px] flex items-center">
          <FaGithub className="mr-[6px] h-[13px] w-[13px]" />
          Github
        </a>
        <a href="#" className="ml-[30px]">API</a>
        <span className="ml-[30px]">Share on social sites</span>
        <div className="ml-[9px] flex items-center">
          <a href="#" aria-label="Twitter"><FaTwitter className="h-[13px] w-[13px]" /></a>
          <a href="#" aria-label="Facebook" className="ml-[11px]"><FaFacebookF className="h-[13px] w-[10px]" /></a>
          <a href="#" aria-label="LinkedIn" className="ml-[10px]"><FaLinkedinIn className="h-[13px] w-[13px]" /></a>
          <a href="#" aria-label="Email" className="ml-[11px]"><Glyph d={ENVELOPE} className="h-[14px] w-[14px]" /></a>
          <a href="#" aria-label="Permalink" className="ml-[14px]"><FaLink className="h-[13px] w-[13px] -scale-x-100" /></a>
          <a href="#" aria-label="RSS" className="ml-[37px]"><FaRss className="h-3 w-3" /></a>
        </div>
      </footer>
    </div>
  );
}
